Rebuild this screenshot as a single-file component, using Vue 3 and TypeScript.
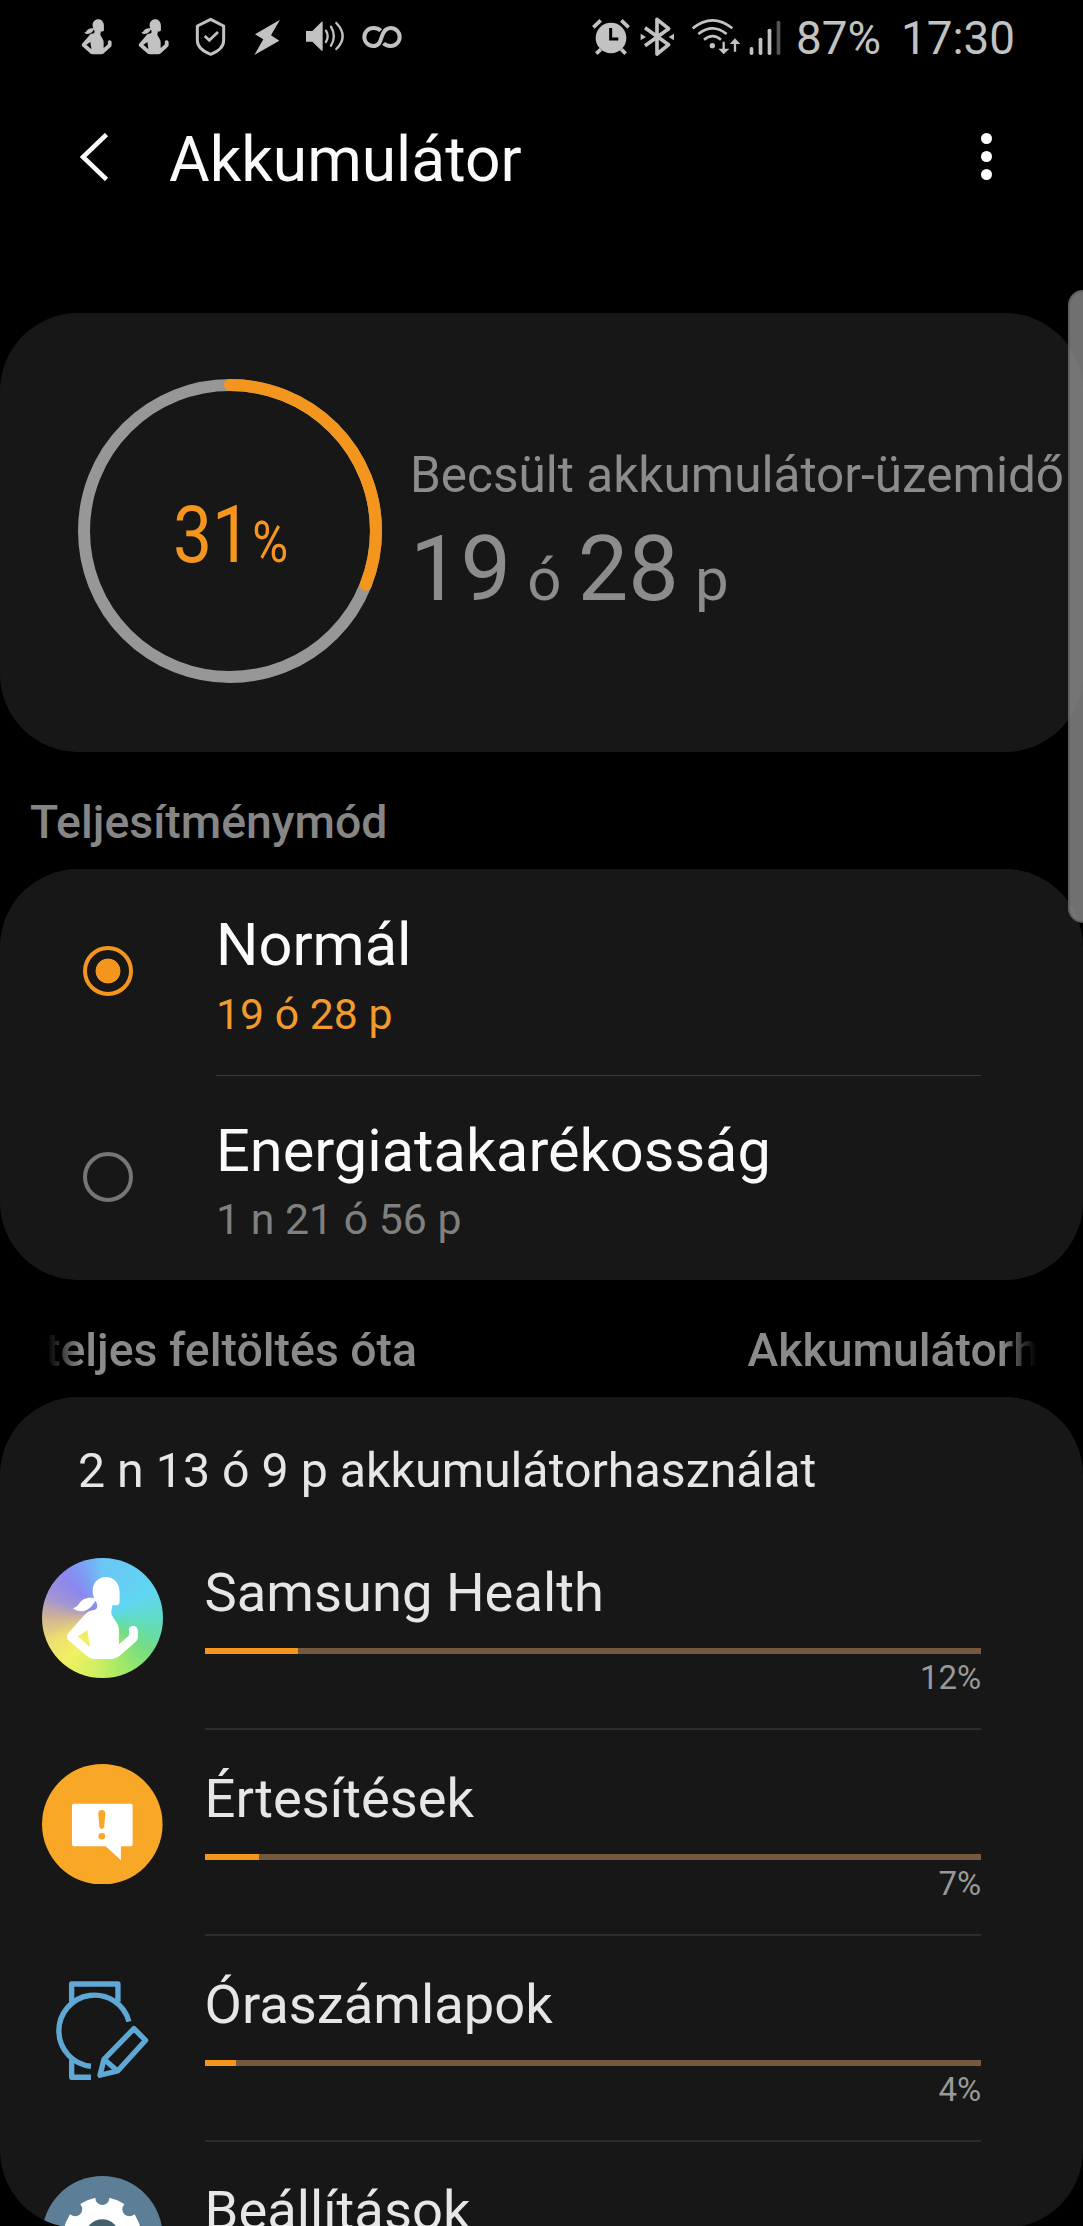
<script setup lang="ts">
import { computed, ref } from 'vue'

interface PowerMode {
  id: string
  title: string
  estimate: string
}

interface AppUsage {
  id: string
  name: string
  percent: number | null
}

const chargeLevel = 31
const ringRadius = 146
const ringLength = 2 * Math.PI * ringRadius
const ringDash = computed(() => `${(ringLength * chargeLevel) / 100} ${ringLength}`)

const modes: PowerMode[] = [
  { id: 'normal', title: 'Normál', estimate: '19 ó 28 p' },
  { id: 'saver', title: 'Energiatakarékosság', estimate: '1 n 21 ó 56 p' },
]
const selectedMode = ref('normal')

const apps: AppUsage[] = [
  { id: 'health', name: 'Samsung Health', percent: 12 },
  { id: 'notifications', name: 'Értesítések', percent: 7 },
  { id: 'watch', name: 'Óraszámlapok', percent: 4 },
  { id: 'settings', name: 'Beállítások', percent: null },
]

const gearNotches = Array.from({ length: 8 }, (_, i) => {
  const a = (i * Math.PI) / 4
  return { x: 247 + 115 * Math.sin(a), y: 859 - 115 * Math.cos(a) }
})

const runner =
  'M258 141C236 141 218 158 218 182C218 190 220 198 223 204C200 200 185 208 178 220C173 229 167 233 159 235C168 243 180 246 192 243C208 238 219 226 226 212C230 217 232 222 232 226C232 236 228 240 218 241C206 243 199 249 190 259L145 310C139 318 139 326 146 332L199 377C207 384 214 387 224 387H272C284 387 292 384 300 377L345 338C351 333 354 328 354 320V303C354 294 348 288 340 288C331 288 326 294 327 303C328 313 328 316 322 321L297 343V302C297 292 294 283 288 275L281 264C275 256 272 248 275 240L277 226H289C295 226 299 222 299 215V190C300 160 282 141 258 141ZM174 320L202 300L210 352Z'
</script>

<template>
  <div class="screen">
    <header class="status">
      <div class="status-left">
        <svg v-for="n in 2" :key="n" class="note" viewBox="45 45 130 135">
          <path :d="runner" fill-rule="evenodd" transform="translate(6.2 -2.2) scale(.42 .427)" />
        </svg>
        <svg class="note" viewBox="387 45 130 135">
          <path class="line" stroke-width="9" stroke-linejoin="round" d="M452 58L491 78V121C491 140 474 155 452 163C430 155 412 140 412 121V78Z" />
          <path class="line" stroke-width="8" d="M434 108L448 121L474 96" />
        </svg>
        <svg class="note" viewBox="558 45 130 135">
          <path d="M660 59L585 103L610 118L583 165L658 122L633 106Z" />
        </svg>
        <svg class="note" viewBox="729 45 130 135">
          <path d="M738 93H757L785 65H788V152H785L757 125H738Z" />
          <path class="line" stroke-width="7" stroke-linecap="round" d="M798 92Q808 109 798 126M813 80Q830 109 813 137M829 69Q867 109 829 147" />
        </svg>
        <svg class="note" viewBox="900 45 130 135">
          <path class="line" stroke-width="12" d="M962 92C956 86 948 84 940 84A27 27 0 0 0 940 138C955 138 960 128 965 111C970 94 978 84 992 84A27 27 0 0 1 992 138C984 138 976 136 971 130" />
        </svg>
      </div>
      <div class="status-right">
        <svg class="alarm" viewBox="60 45 130 135">
          <circle cx="123" cy="114" r="46" />
          <path class="line" stroke-width="11" d="M70 82L92 61M176 82L154 61M79 161L92 148M167 161L154 148" />
          <path class="cut" stroke-width="9" d="M122 84V117H145" />
        </svg>
        <svg class="bt" viewBox="205 45 115 135">
          <path class="line" stroke-width="11" stroke-linejoin="round" d="M226 83L297 134L262 162V58L297 86L226 137" />
          <path d="M213 101L229 111L213 121ZM313 101L297 111L313 121Z" />
        </svg>
        <svg class="wifi" viewBox="360 45 155 135">
          <path class="line" stroke-width="8" d="M368 85Q428 37 487 85M385 102Q428 68 470 102M402 119Q428 98 453 119" />
          <circle cx="427" cy="137" r="8" />
          <path class="line" stroke-width="7" d="M461 125V154M495 155V124" />
          <path d="M445 146H478L461 163ZM479 132H511L495 115Z" />
        </svg>
        <svg class="signal" viewBox="535 45 105 135">
          <rect x="540" y="141" width="11" height="24" rx="5" />
          <rect x="567" y="113" width="11" height="52" rx="5" />
          <rect x="594" y="86" width="11" height="79" rx="5" />
          <rect x="621" y="62" width="11" height="103" rx="5" class="off" />
        </svg>
        <span class="level">87%</span>
        <span class="clock">17:30</span>
      </div>
    </header>

    <div class="appbar">
      <svg class="back" viewBox="0 0 30 48"><path d="M26.5 1.5L3 24L26.5 46.5" /></svg>
      <h1>Akkumulátor</h1>
      <div class="more"><i /><i /><i /></div>
    </div>

    <main>
      <section class="card summary">
        <svg class="ring" viewBox="0 0 304 304">
          <circle class="ring-track" cx="152" cy="152" :r="ringRadius" />
          <circle class="ring-value" cx="152" cy="152" :r="ringRadius" :stroke-dasharray="ringDash" transform="rotate(-90 152 152)" />
          <g class="ring-text">
            <text font-size="80" transform="translate(95 183.3) scale(.87 1)">{{ chargeLevel }}</text>
            <text font-size="57" transform="translate(174.3 183.3) scale(.86 1)">%</text>
          </g>
        </svg>
        <div class="estimate">
          <p class="estimate-label">Becsült akkumulátor-üzemidő</p>
          <p class="estimate-value"><b>19</b> ó <b>28</b> p</p>
        </div>
      </section>

      <h2 class="label">Teljesítménymód</h2>

      <section class="card">
        <div v-for="mode in modes" :key="mode.id" class="mode" :class="{ selected: mode.id === selectedMode }" @click="selectedMode = mode.id">
          <span class="radio" />
          <div class="mode-text">
            <p class="mode-title">{{ mode.title }}</p>
            <p class="mode-sub">{{ mode.estimate }}</p>
          </div>
        </div>
      </section>

      <nav class="tabs">
        <span class="tab-prev">teljes feltöltés óta</span>
        <span class="tab-next">Akkumulátorh</span>
      </nav>

      <section class="card usage">
        <p class="usage-head">2 n 13 ó 9 p akkumulátorhasználat</p>
        <div v-for="app in apps" :key="app.id" class="app">
          <svg v-if="app.id === 'health'" class="app-icon health" viewBox="66 84 362 362">
            <path :d="runner" fill="#fff" fill-rule="evenodd" />
          </svg>
          <svg v-else-if="app.id === 'notifications'" class="app-icon" viewBox="66 71 362 362">
            <circle cx="247" cy="252" r="181" fill="#f9a726" />
            <path fill="#fff" d="M161 190H333Q338 190 338 195V313Q338 318 333 318H303V360L257 318H161Q156 318 156 313V195Q156 190 161 190Z" />
            <path fill="#f9a726" d="M235 220Q235 209 245.500 209Q256 209 256 220L253 258Q252 266 245.500 266Q239 266 238 258Z" />
            <circle cx="245.500" cy="288" r="10" fill="#f9a726" />
          </svg>
          <svg v-else-if="app.id === 'watch'" class="app-icon" viewBox="66 60 362 362">
            <g fill="none" stroke="#5fa8d6" stroke-width="16" stroke-linejoin="round">
              <path d="M155 155V102H294V155" />
              <path d="M327 215A107 107 0 1 0 213 349" />
              <path d="M155 328V382H213" />
              <path d="M342 236L377 271L293 363L240 376L252 328Z" />
              <path d="M252 328L293 363" />
            </g>
          </svg>
          <svg v-else class="app-icon" viewBox="66 678 362 362">
            <circle cx="247" cy="859" r="181" fill="#5c7f97" />
            <circle cx="247" cy="859" r="117" fill="#fff" />
            <circle v-for="(p, i) in gearNotches" :key="i" :cx="p.x" :cy="p.y" r="21" fill="#5c7f97" />
            <circle cx="247" cy="859" r="51" fill="#44606c" />
          </svg>
          <div class="app-body">
            <p class="app-name">{{ app.name }}</p>
            <template v-if="app.percent !== null">
              <div class="bar"><div class="bar-fill" :style="{ width: app.percent + '%' }" /></div>
              <p class="app-percent">{{ app.percent }}%</p>
            </template>
          </div>
        </div>
      </section>
    </main>

    <div class="scrollbar" />
  </div>
</template>

<style>
body {
  margin: 0;
  background: #000;
}
</style>

<style scoped>
.screen {
  position: relative;
  width: 1083px;
  height: 2226px;
  overflow: hidden;
  background: #000;
  color: #fafafa;
  font-family: Roboto, 'Liberation Sans', sans-serif;
}
p, h1, h2 {
  margin: 0;
  font-weight: 400;
  white-space: nowrap;
}
.status {
  display: flex;
  justify-content: space-between;
  height: 80px;
  box-sizing: border-box;
  padding: 15px 70px 0 75px;
  color: #c2c2c2;
}
.status svg {
  height: 45px;
  fill: #c2c2c2;
}
.status .line {
  fill: none;
  stroke: #c2c2c2;
}
.status .cut {
  fill: none;
  stroke: #000;
}
.status .off {
  fill: #555;
}
.status-left {
  display: flex;
  gap: 13.67px;
}
.note {
  width: 43.33px;
}
.status-right {
  display: flex;
}
.alarm {
  width: 43.33px;
  margin-right: 5px;
}
.bt {
  width: 38.33px;
  margin-right: 13.33px;
}
.wifi {
  width: 51.67px;
  margin-right: 6.67px;
}
.signal {
  width: 35px;
  margin-right: 13px;
}
.level, .clock {
  font-size: 45.800px;
  line-height: 47px;
}
.level {
  width: 105px;
}
.clock {
  width: 112px;
}
.appbar {
  display: flex;
  align-items: center;
  height: 153px;
  padding: 0 88px 0 80px;
}
.back {
  width: 30px;
  height: 48px;
  fill: none;
  stroke: #fafafa;
  stroke-width: 4.600;
}
.appbar h1 {
  flex: 1;
  padding: 6px 0 0 59px;
  font-size: 62.300px;
  line-height: 80px;
}
.more {
  display: flex;
  flex-direction: column;
  align-items: center;
  gap: 7.300px;
  width: 17px;
}
.more i {
  width: 11px;
  height: 11px;
  border-radius: 50%;
  background: #fff;
}
main {
  padding-top: 80px;
}
.card {
  overflow: hidden;
  border-radius: 78px;
  background: #171717;
}
.summary {
  display: flex;
  height: 439px;
}
.ring {
  width: 304px;
  height: 304px;
  margin: 66px 28px 0 78px;
}
.ring circle {
  fill: none;
  stroke-width: 12;
}
.ring .ring-track {
  stroke: #979797;
}
.ring .ring-value {
  stroke: #f4961e;
  stroke-linecap: round;
}
.ring-text {
  fill: #f4961e;
}
.estimate {
  padding-top: 131.600px;
  color: #8c8c8c;
}
.estimate-label {
  font-size: 49.500px;
  line-height: 60px;
}
.estimate-value {
  margin-top: 15.600px;
  font-size: 60px;
  line-height: 100px;
  word-spacing: 1.300px;
}
.estimate-value b {
  font-size: 90px;
  font-weight: 400;
}
.label {
  height: 77px;
  padding: 40px 0 0 30px;
  color: #868686;
  font-size: 46.400px;
  font-weight: 500;
  line-height: 60px;
}
.mode {
  display: flex;
  height: 205.600px;
}
.radio {
  box-sizing: border-box;
  width: 50px;
  height: 50px;
  margin: 77px 83px 0 83px;
  border: 4px solid #767676;
  border-radius: 50%;
}
.selected .radio {
  border-color: #f4961e;
  background: radial-gradient(circle, #f4961e 12px, transparent 12.800px);
}
.mode-text {
  box-sizing: border-box;
  width: 765px;
  padding-top: 41.400px;
}
.mode + .mode .mode-text {
  border-top: 1.500px solid #3c3c3c;
  padding-top: 40.400px;
}
.mode-title {
  font-size: 59.500px;
  line-height: 70px;
}
.mode-sub {
  margin-top: 8.500px;
  color: #808080;
  font-size: 42.800px;
  line-height: 50px;
}
.selected .mode-sub {
  color: #f29b2c;
}
.tabs {
  display: flex;
  justify-content: space-between;
  height: 77.500px;
  margin: 0 47px;
  padding-top: 39.600px;
  overflow: hidden;
  color: #8a8a8a;
  font-size: 46.400px;
  font-weight: 500;
  line-height: 60px;
  white-space: nowrap;
  -webkit-mask-image: linear-gradient(90deg, transparent, #000 34px, #000 955px, transparent);
  mask-image: linear-gradient(90deg, transparent, #000 34px, #000 955px, transparent);
}
.tab-prev {
  margin-left: -2px;
}
.tab-next {
  margin-right: -3px;
}
.usage {
  height: 831px;
}
.usage-head {
  padding: 44px 0 23px 78px;
  color: #e6e6e6;
  font-size: 48.300px;
  line-height: 60px;
}
.app {
  display: flex;
  height: 206px;
}
.app-icon {
  width: 120.600px;
  height: 120.600px;
  margin: 33.500px 42px 0 42px;
}
.health {
  border-radius: 50%;
  background: conic-gradient(#6cc6f6, #5fd6f2 60deg, #60dcc0 95deg, #74dc84 125deg, #9ee868 155deg, #d4f060 190deg, #f2f062 220deg, #eee070 245deg, #d0b494 270deg, #a294d4 292deg, #8c86f0 318deg, #7ca0f4 340deg, #6cc6f6);
}
.app-body {
  box-sizing: border-box;
  width: 776.700px;
  padding-top: 36.400px;
  border-bottom: 2px solid #2c2c2c;
}
.app-name {
  color: #e6e6e6;
  font-size: 54.300px;
  line-height: 64px;
}
.bar {
  height: 6.500px;
  margin-top: 23px;
  background: #74593f;
}
.bar-fill {
  height: 100%;
  background: #f4961e;
}
.app-percent {
  margin-top: 4px;
  color: #999;
  font-size: 33px;
  line-height: 40px;
  text-align: right;
}
.scrollbar {
  position: absolute;
  top: 290px;
  right: 0;
  box-sizing: border-box;
  width: 15px;
  height: 633px;
  border: 2px solid rgba(90, 90, 90, 0.7);
  border-right: 0;
  border-radius: 15px 0 0 15px;
  background: rgba(150, 150, 150, 0.75);
}
</style>
